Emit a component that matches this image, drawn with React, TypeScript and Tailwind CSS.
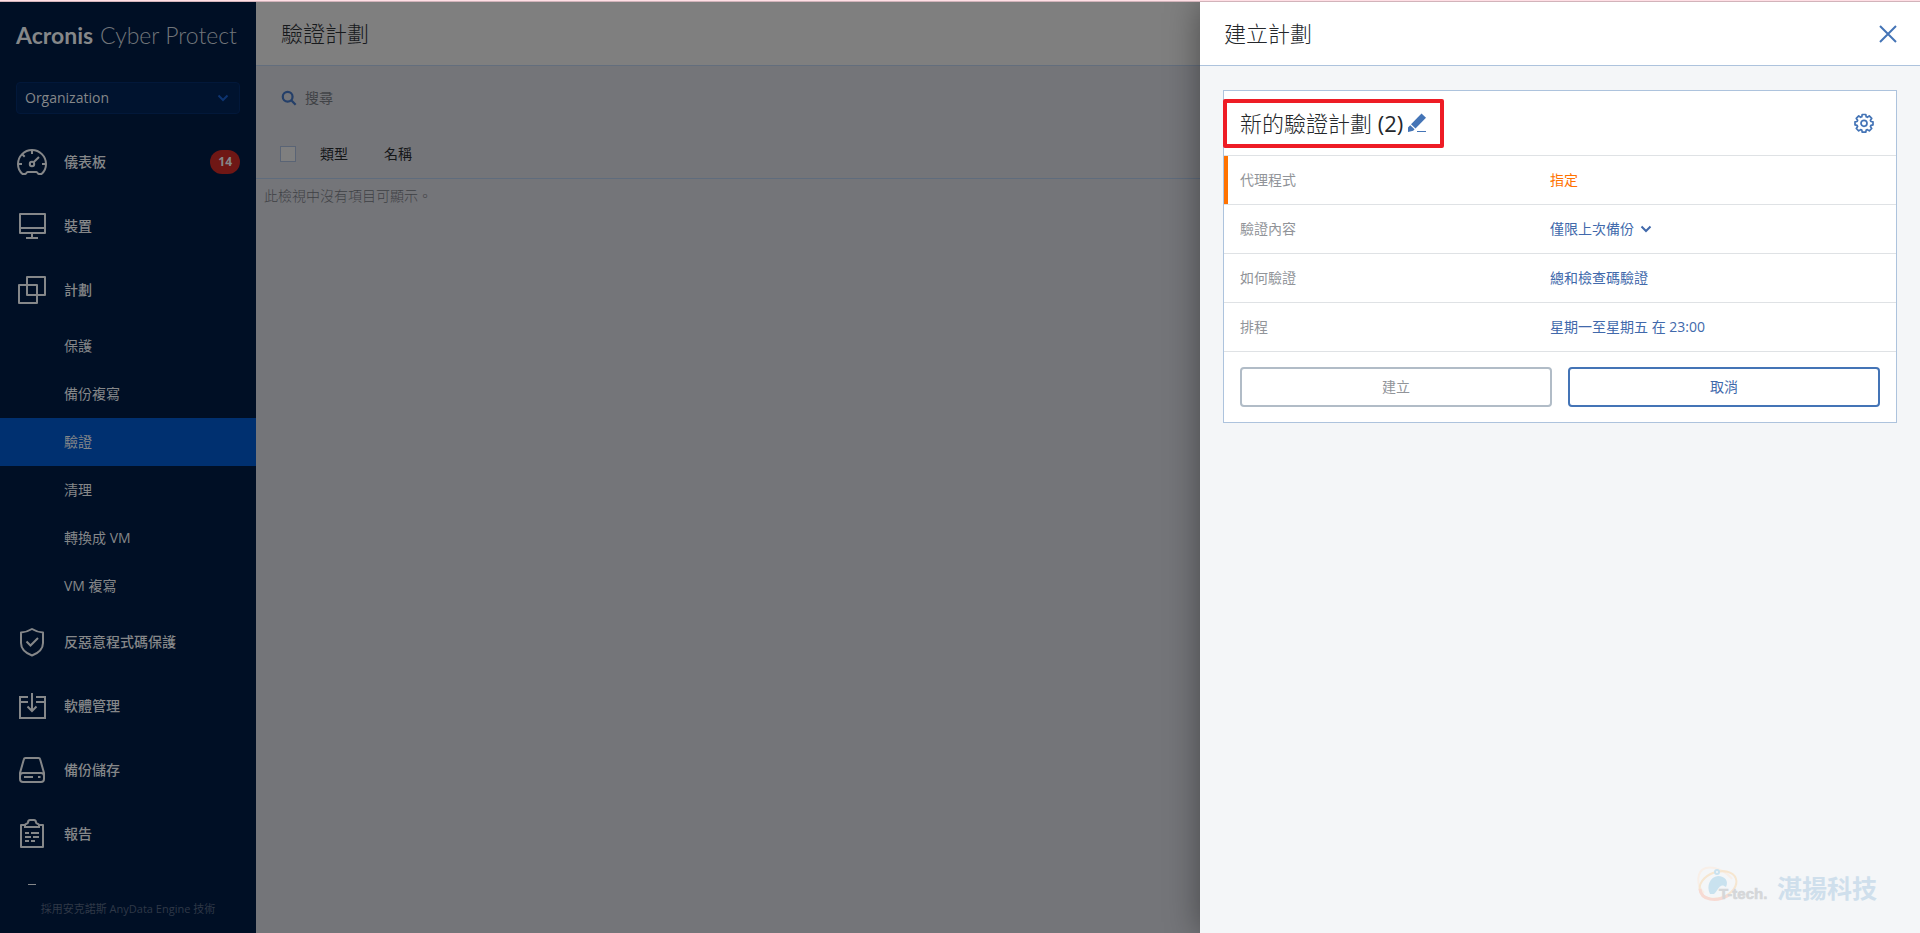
import clsx from "clsx";
import { useState } from "react";
import type { ReactNode } from "react";

const FONT = "font-['Open_Sans','Noto_Sans_CJK_TC',sans-serif]";

function NavIcon({ children }: { children: ReactNode }) {
  return (
    <svg
      viewBox="0 0 32 32"
      className="h-8 w-8 shrink-0"
      fill="none"
      stroke="currentColor"
      strokeWidth="2"
      aria-hidden="true"
    >
      {children}
    </svg>
  );
}

const ICONS = {
  dashboard: (
    <NavIcon>
      <path d="M9.500 28H6.500C3.500 25.500 2 22 2 18a14 14 0 0 1 28 0c0 4-1.500 7.500-4.500 10h-3c-.8 0-1-2-2-2h-9c-1 0-1.200 2-2 2z" />
      <path d="M2 18h4M26 18h4M16 4v4M6.200 8.200l2.500 2.500" />
      <circle cx="16" cy="18" r="2.200" />
      <path d="M17.600 16.300l5.400-5.300" />
    </NavIcon>
  ),
  devices: (
    <NavIcon>
      <path d="M4 4h25v19H4zM4 18h25M16 23v5M10 28h12" strokeLinejoin="round" />
    </NavIcon>
  ),
  plans: (
    <NavIcon>
      <path d="M11 3h18v18H11zM3 11h18v18H3z" strokeLinejoin="round" />
    </NavIcon>
  ),
  shield: (
    <NavIcon>
      <path d="M16 3c3.500 2.200 7 3.200 11 3.500V17c0 6.500-4.500 10-11 12.500C9.500 27 5 23.500 5 17V6.500C9 6.200 12.500 5.200 16 3z" strokeLinejoin="round" />
      <path d="M10.500 15.500l4 4L22 12" />
    </NavIcon>
  ),
  software: (
    <NavIcon>
      <path d="M12 7H4v21h25V7h-9M4 12h8M20 12h9M16 3v18M11.500 16.500L16 21l4.500-4.500" />
    </NavIcon>
  ),
  storage: (
    <NavIcon>
      <path d="M9.500 4h13c1 0 1.500.5 1.700 1.500L28 19v6a3 3 0 0 1-3 3H7a3 3 0 0 1-3-3v-6L7.800 5.500C8 4.500 8.500 4 9.500 4z" />
      <path d="M4 22a3 3 0 0 1 3-3h18a3 3 0 0 1 3 3M8 23h9M22 23h2.500" />
    </NavIcon>
  ),
  reports: (
    <NavIcon>
      <path d="M9 7H5v22h22V7h-4" strokeLinejoin="round" />
      <path d="M9 9V7c0-1.500 3-1 3-2.500S13 2 14 2h4c1 0 2 1 2 2.500s3 1 3 2.500v2z" />
      <path d="M9 15h4M15 15h8M9 19h6M17 19h6M9 23h4M15 23h4" />
    </NavIcon>
  ),
};

type Item = { label: string; icon: keyof typeof ICONS; badge?: number; sub?: string[] };

const NAV: Item[] = [
  { label: "儀表板", icon: "dashboard", badge: 14 },
  { label: "裝置", icon: "devices" },
  {
    label: "計劃",
    icon: "plans",
    sub: ["保護", "備份複寫", "驗證", "清理", "轉換成 VM", "VM 複寫"],
  },
  { label: "反惡意程式碼保護", icon: "shield" },
  { label: "軟體管理", icon: "software" },
  { label: "備份儲存", icon: "storage" },
  { label: "報告", icon: "reports" },
];

function Chevron({ className }: { className?: string }) {
  return (
    <svg viewBox="0 0 12 8" className={className} fill="none" stroke="currentColor" strokeWidth="2" aria-hidden="true">
      <path d="M1.500 1.500L6 6l4.500-4.500" />
    </svg>
  );
}

function Sidebar() {
  return (
    <aside className="flex w-64 shrink-0 flex-col overflow-hidden bg-[#000f25] text-[#858789]">
      <svg viewBox="0 0 256 64" className="h-16 w-64 shrink-0" fill="currentColor" role="img" aria-label="Acronis Cyber Protect">
        <text x="16" y="42" fontSize="23" fontWeight="700" fontFamily="Lato, sans-serif">
          Acronis
        </text>
        <text x="100" y="42" fontSize="23" fontWeight="300" fontFamily="Lato, sans-serif" opacity="0.85">
          Cyber Protect
        </text>
      </svg>
      <div className="px-4 pt-4 pb-4">
        <button
          type="button"
          className="flex h-8 w-full items-center justify-between rounded-sm border border-[#02183a] bg-[#00132f] px-2 text-sm"
        >
          Organization
          <Chevron className="mr-0.5 h-2 w-3 text-[#0d3470]" />
        </button>
      </div>
      <nav className="min-h-0 flex-1 overflow-hidden">
        {NAV.map((item) => (
          <div key={item.label}>
            <a href="#" className="flex h-16 items-center gap-4 px-4 text-sm font-medium">
              {ICONS[item.icon]}
              <span className="flex-1">{item.label}</span>
              {item.badge && (
                <span className="flex h-6 items-center rounded-full bg-[#6f1715] px-2 text-xs font-bold">
                  {item.badge}
                </span>
              )}
            </a>
            {item.sub?.map((s) => (
              <a
                key={s}
                href="#"
                className={clsx("flex h-12 items-center pl-16 text-sm", s === "驗證" && "bg-[#003070]")}
              >
                {s}
              </a>
            ))}
          </div>
        ))}
        <div className="ml-7 pt-[18px]">
          <div className="h-px w-2 bg-current" />
        </div>
      </nav>
      <footer className="flex h-12 shrink-0 items-center justify-center text-[11px] text-[#2f3847]">
        採用安克諾斯 AnyData Engine 技術
      </footer>
    </aside>
  );
}

function PlanList() {
  return (
    <main className="min-w-0 flex-1 bg-[#747579]">
      <header className="flex h-16 items-center border-b border-[#636e7d] bg-[#7f7f7f] px-[25px]">
        <h1 className="text-[22px] font-light text-[#17191c]">驗證計劃</h1>
      </header>
      <label className="flex h-16 items-center gap-2 px-[25px] text-[#243f69]">
        <svg viewBox="0 0 18 18" className="h-4 w-4" fill="none" stroke="currentColor" strokeWidth="2.500" aria-hidden="true">
          <circle cx="7.500" cy="7.500" r="5.500" />
          <path d="M11.500 11.500l5 5" />
        </svg>
        <input
          type="search"
          placeholder="搜尋"
          className="flex-1 bg-transparent text-sm outline-none placeholder:text-[#414347]"
        />
      </label>
      <table className="w-full text-left text-sm">
        <thead>
          <tr className="h-12 border-b border-[#5f6c7d] text-[#141618]">
            <th className="w-16 pl-6">
              <input
                type="checkbox"
                aria-label="全選"
                className="block h-4 w-4 appearance-none border border-[#5a6475] bg-[#7f7f7f]"
              />
            </th>
            <th className="w-16 font-normal">類型</th>
            <th className="font-normal">名稱</th>
          </tr>
        </thead>
        <tbody>
          <tr>
            <td colSpan={3} className="h-9 pl-2 font-light text-[#3f4145]">
              此檢視中沒有項目可顯示。
            </td>
          </tr>
        </tbody>
      </table>
    </main>
  );
}

function Row({ label, children, alert }: { label: string; children: ReactNode; alert?: boolean }) {
  return (
    <div
      className={clsx(
        "grid h-[49px] grid-cols-[31fr_33fr] items-center border-b border-[#dfe2e5] px-4 text-sm",
        alert && "shadow-[inset_4px_0_0_#ff7200]",
      )}
    >
      <span className="text-[#919499]">{label}</span>
      <div className={alert ? "text-[#ff7200]" : "text-[#4169ab]"}>{children}</div>
    </div>
  );
}

function Watermark() {
  return (
    <svg viewBox="0 0 184 44" className="h-11 w-46" role="img" aria-label="T-tech 湛揚科技">
      <g fill="none">
        <path d="M8 28C0 20 0 6 10 3c8-2 20 3 26 11" stroke="#f8efe8" strokeWidth="2" />
        <ellipse cx="22" cy="20" rx="19" ry="13" stroke="#f6e6d0" strokeWidth="2" transform="rotate(-20 22 20)" />
        <path d="M4 24c1 11 16 14 29 6" stroke="#f7dad3" strokeWidth="3" />
        <path
          d="M14 29c-4-8 0-17 8-18 7 0 11 5 8 11-2-1-3-2-5-1-3 1-4 6-7 8z"
          fill="#c9e2ef"
        />
        <circle cx="21" cy="7" r="3" fill="#c9e2ef" />
        <circle cx="21" cy="7" r="1" fill="#f4f6f8" />
      </g>
      <text x="23" y="34" fontSize="15" fontWeight="700" fill="#d5d7d9" stroke="#d5d7d9" strokeWidth="0.600" fontFamily="Liberation Sans, sans-serif">
        T-tech.
      </text>
      <text x="81" y="33" fontSize="25" fontWeight="700" fill="#cfdfec" fontFamily="Noto Sans CJK TC, sans-serif">
        湛揚科技
      </text>
    </svg>
  );
}

function CreatePlan() {
  const [name] = useState("新的驗證計劃");

  return (
    <section className="relative flex w-[720px] shrink-0 flex-col bg-[#f4f6f8] shadow-[0_0_32px_rgba(0,0,0,0.4)]">
      <header className="flex h-16 shrink-0 items-center justify-between border-b border-[#adc3dd] bg-white px-6">
        <h2 className="text-[22px] font-light text-[#24272b]">建立計劃</h2>
        <button type="button" aria-label="關閉" className="text-[#4474b6]">
          <svg viewBox="0 0 16 16" className="h-4 w-4 overflow-visible" fill="none" stroke="currentColor" strokeWidth="2">
            <path d="M0 0l16 16M16 0L0 16" />
          </svg>
        </button>
      </header>
      <form className="mx-[23px] mt-6 border border-[#adc3dd] bg-white">
        <div className="flex h-[65px] items-center justify-between border-b border-[#dfe2e5] pr-[22px]">
          <div className="-ml-px flex h-[49px] items-center gap-1 rounded-xs border-4 border-[#ee1c25] px-[13px]">
            <h3 className="text-[22px] font-light text-[#24272b]">
              {name} <span className="font-normal">(2)</span>
            </h3>
            <button type="button" aria-label="重新命名" className="text-[#4474b6]">
              <svg viewBox="0 0 20 20" className="h-5 w-5" fill="currentColor">
                <path d="M14.500.500l4.500 4.200L8.500 15.500 4 11.300zM3.200 12.200l4.400 4-1.400 1.500-5.200 1.300v-4.500zM10 18h9v1h-9z" />
              </svg>
            </button>
          </div>
          <button type="button" aria-label="設定" className="text-[#4474b6]">
            <svg viewBox="0 0 20 20" className="h-5 w-5" fill="none" stroke="currentColor" strokeWidth="1.700" strokeLinejoin="round">
              <path d="M8.200 1.500h3.600l.4 2.300 1.200.5 1.900-1.400 2.400 2.500-1.300 1.900.5 1.200 2.100.3v3.100l-2.100.5-.5 1.200 1.300 1.900-2.400 2.400-1.900-1.300-1.200.5-.4 2.100H8.200l-.4-2.100-1.200-.5-1.900 1.300-2.400-2.400 1.300-1.900-.5-1.200-2.100-.5V8.800l2.100-.3.5-1.200L2.300 5.400l2.400-2.500 1.900 1.400 1.200-.5z" />
              <circle cx="10" cy="10.300" r="3" />
            </svg>
          </button>
        </div>
        <Row label="代理程式" alert>
          <button type="button">指定</button>
        </Row>
        <Row label="驗證內容">
          <button type="button" className="flex items-center gap-1.5">
            僅限上次備份
            <Chevron className="h-2 w-3" />
          </button>
        </Row>
        <Row label="如何驗證">
          <button type="button">總和檢查碼驗證</button>
        </Row>
        <Row label="排程">
          <button type="button">星期一至星期五 在 23:00</button>
        </Row>
        <div className="grid grid-cols-2 gap-4 px-4 py-[15px] text-sm">
          <button type="button" disabled className="h-10 rounded-sm border-2 border-[#b1bcc7] text-[#919499]">
            建立
          </button>
          <button type="button" className="h-10 rounded-sm border-2 border-[#4474b6] text-[#4169ab]">
            取消
          </button>
        </div>
      </form>
      <div className="mt-auto mr-10 mb-6 self-end">
        <Watermark />
      </div>
    </section>
  );
}

export default function App() {
  return (
    <div className={clsx("flex h-screen flex-col overflow-hidden", FONT)}>
      <div className="relative z-10 h-0.5 shrink-0 border-b border-[#d2b3ba] bg-[#ffdfe5]" />
      <div className="flex min-h-0 flex-1">
        <Sidebar />
        <PlanList />
        <CreatePlan />
      </div>
    </div>
  );
}
